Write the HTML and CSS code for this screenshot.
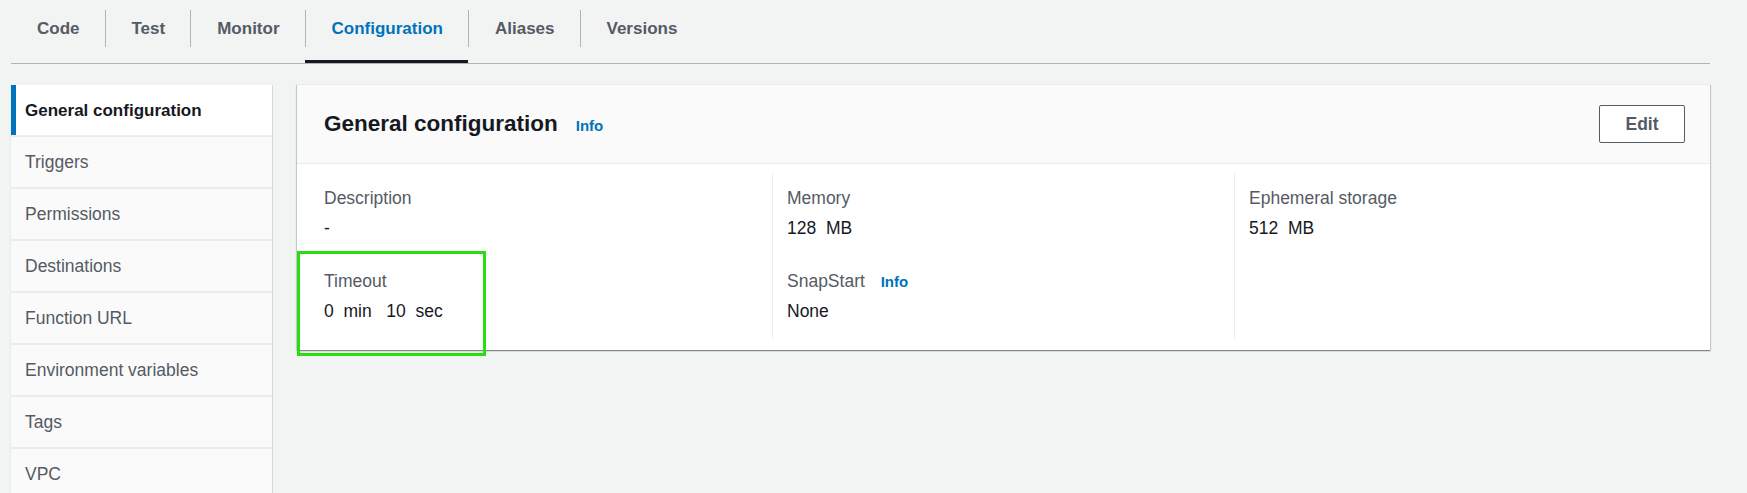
FILE: index.html
```html
<!DOCTYPE html>
<html lang="en">
<head>
<meta charset="utf-8">
<title>Configuration</title>
<link rel="stylesheet" href="styles.css">
</head>
<body>
<div class="page">
  <nav class="tabs">
    <div class="tab first"><span>Code</span></div>
    <div class="tab"><span>Test</span></div>
    <div class="tab"><span>Monitor</span></div>
    <div class="tab active"><span>Configuration</span></div>
    <div class="tab"><span>Aliases</span></div>
    <div class="tab"><span>Versions</span></div>
  </nav>
  <div class="content">
    <aside class="sidenav">
      <div class="item active">General configuration</div>
      <div class="item">Triggers</div>
      <div class="item">Permissions</div>
      <div class="item">Destinations</div>
      <div class="item">Function URL</div>
      <div class="item">Environment variables</div>
      <div class="item">Tags</div>
      <div class="item">VPC</div>
    </aside>
    <section class="panel">
      <header class="panel-header">
        <div class="title">
          <h2>General configuration</h2>
          <a class="info">Info</a>
        </div>
        <button class="btn">Edit</button>
      </header>
      <div class="panel-body">
        <div class="col">
          <div class="kv">
            <div class="label">Description</div>
            <div class="value">-</div>
          </div>
          <div class="kv">
            <div class="label">Timeout</div>
            <div class="value">0&nbsp; min&nbsp;&nbsp; 10&nbsp; sec</div>
          </div>
        </div>
        <div class="col">
          <div class="kv">
            <div class="label">Memory</div>
            <div class="value">128&nbsp; MB</div>
          </div>
          <div class="kv">
            <div class="label">SnapStart <a class="info small">Info</a></div>
            <div class="value">None</div>
          </div>
        </div>
        <div class="col">
          <div class="kv">
            <div class="label">Ephemeral storage</div>
            <div class="value">512&nbsp; MB</div>
          </div>
        </div>
      </div>
      <div class="highlight"></div>
    </section>
  </div>
</div>
</body>
</html>
```

FILE: styles.css
```css
html, body {
  margin: 0;
  padding: 0;
  background: #f2f3f3;
  overflow: hidden;
  height: 493px;
}

body {
  font-family: "Liberation Sans", Arial, sans-serif;
  font-size: 17.5px;
  line-height: 25px;
  color: #16191f;
}

.page {
  padding: 0 37px 0 11px;
}

/* Tabs */
.tabs {
  display: flex;
  height: 64px;
  box-sizing: border-box;
  padding-top: 10px;
  border-bottom: 1px solid #aab7b8;
}

.tab {
  height: 53px;
  box-sizing: border-box;
}

.tab span {
  display: block;
  line-height: 37px;
  padding: 0 25px 0 26px;
  font-size: 17px;
  font-weight: bold;
  color: #545b64;
  border-left: 1px solid #aab7b8;
}

.tab.first span {
  border-left: none;
  padding-left: 26px;
}

.tab.active {
  border-bottom: 3px solid #16191f;
}

.tab.active span {
  color: #0073bb;
}

/* Content */
.content {
  display: flex;
  align-items: flex-start;
  gap: 25px;
  margin-top: 21px;
}

.sidenav {
  width: 261px;
  flex: none;
  background: #fafafa;
  box-shadow: 1px 0 0 0 #d5dbdb, -1px 0 0 0 #eaeded;
}

.sidenav .item {
  height: 52px;
  box-sizing: border-box;
  display: flex;
  align-items: center;
  padding-left: 14px;
  border-bottom: 2px solid #eaeded;
  color: #545b64;
  white-space: nowrap;
}

.sidenav .item.active {
  background: #ffffff;
  color: #16191f;
  font-weight: bold;
  font-size: 17px;
  box-shadow: inset 5px 0 0 #0073bb;
}

/* Panel */
.panel {
  flex: 1;
  position: relative;
  background: #ffffff;
  box-shadow: 0 1px 1px 0 rgba(0, 28, 36, 0.3), 1px 1px 1px 0 rgba(0, 28, 36, 0.15), -1px 1px 1px 0 rgba(0, 28, 36, 0.15);
  border-top: 1px solid #eaeded;
  margin-top: -1px;
}

.panel-header {
  display: flex;
  align-items: center;
  justify-content: space-between;
  padding: 20px 25px 20px 27px;
  background: #fafafa;
  border-bottom: 1px solid #eaeded;
}

.title {
  display: flex;
  align-items: baseline;
  gap: 18px;
  margin-top: -1px;
}

.title h2 {
  margin: 0;
  font-size: 22.5px;
  line-height: 30px;
  font-weight: bold;
  color: #16191f;
}

.info {
  font-size: 15px;
  font-weight: bold;
  color: #0073bb;
  text-decoration: none;
}

.info.small {
  margin-left: 11px;
}

.btn {
  width: 86px;
  height: 38px;
  background: #ffffff;
  border: 1px solid #545b64;
  border-radius: 2px;
  font-family: "Liberation Sans", Arial, sans-serif;
  font-size: 17.5px;
  font-weight: bold;
  color: #545b64;
  padding: 0;
}

.panel-body {
  display: grid;
  grid-template-columns: 1fr 1fr 1fr;
  padding: 9px 14px 11px 13px;
}

.col {
  padding: 13px 14px 15px 14px;
  display: flex;
  flex-direction: column;
  gap: 28px;
}

.col + .col {
  border-left: 1px solid #eaeded;
}

.kv .label {
  color: #545b64;
  margin-bottom: 5px;
}

.kv .value {
  color: #16191f;
}

.highlight {
  position: absolute;
  left: 0;
  top: 166px;
  width: 189px;
  height: 105px;
  box-sizing: border-box;
  border: 3px solid #27df0e;
  pointer-events: none;
}
```
